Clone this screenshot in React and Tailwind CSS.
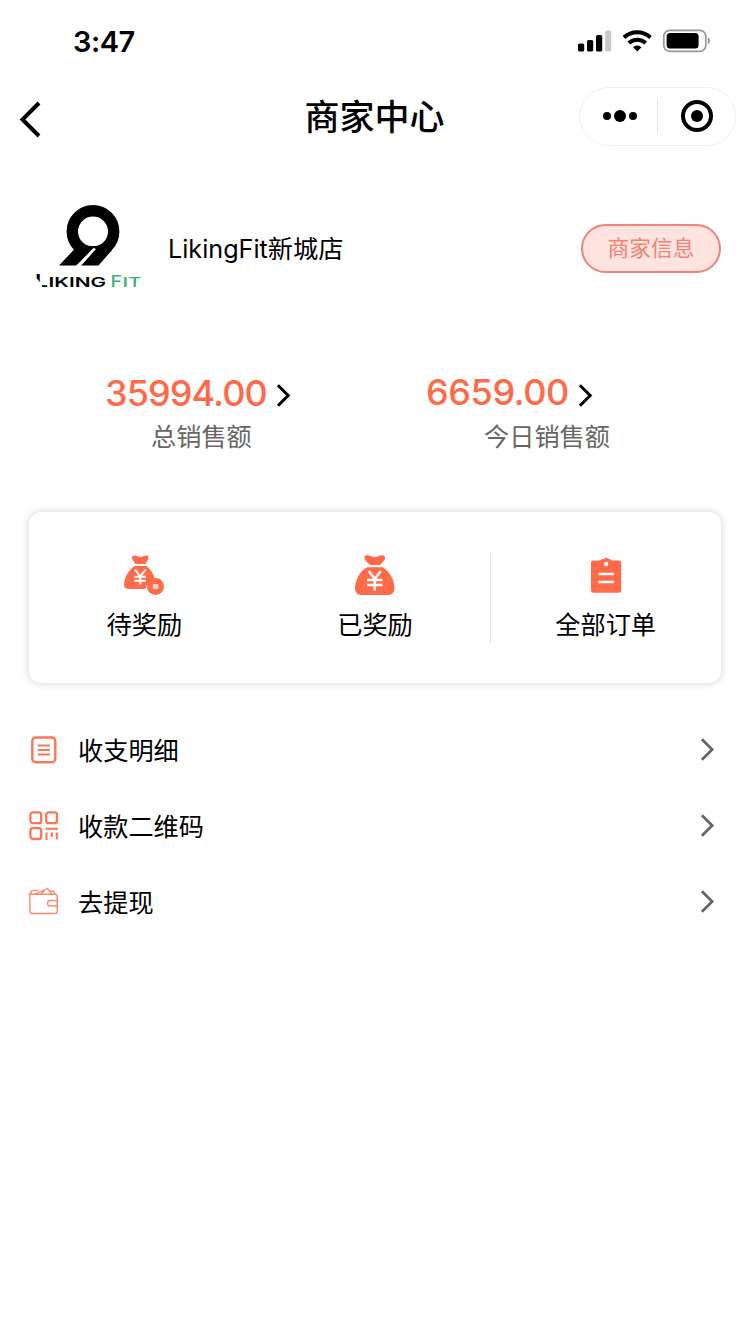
import React from "react";

const MoneyBag = ({ children }) => (
  <svg viewBox="0 0 42 42" className="w-[42px] h-[42px]" fill="#ff6a48">
    {children}
  </svg>
);

const PendingIcon = () => (
  <MoneyBag>
    <path d="M9.5 5.500C8 2.500 10.500 1 13 1.800c2 .7 2.400 1.200 4.300 1.200s2.300-.5 4.300-1.200C24.500 1 26.500 2.700 25 5.500L22.300 10H12.500z" />
    <path d="M11.500 12h12c4.500 3.500 8 9.500 8.500 14.500-5 .5-9 4-9.500 8.500H5.500C2 35 .6 32 1.200 29c.8-6.500 4.500-13 10.300-17z" />
    <path
      d="M12 15.500l5.300 7 5.300-7M11.500 22.700h11.500M11.500 26.800h11.500M17.300 22v8.500"
      fill="none"
      stroke="#fff"
      strokeWidth="2"
    />
    <circle cx="32.500" cy="32.500" r="8.500" />
    <rect x="29.800" y="30" width="5.600" height="5" rx="1" fill="#ffd5ca" />
  </MoneyBag>
);

const RewardedIcon = () => (
  <MoneyBag>
    <path d="M11 5.500C9.200 2 12 .5 15 1.600c2.200.8 3.600 1.400 5.700 1.400s3.500-.6 5.700-1.400c3-1.100 6 .6 4.200 3.900-1.300 2.300-2.800 4-5 5.500h-9.500c-2.200-1.500-3.800-3.200-5.100-5.500z" />
    <path d="M12.800 13.300h16c6.500 4 10.500 11 11.500 18.500.9 6-1.500 9.200-5.800 9.200H7c-4.300 0-6.700-3.200-5.800-9.200 1-7.500 5.100-14.500 11.600-18.500z" />
    <path
      d="M14.800 17l6 8 6-8M13 26h15.500M13 31h15.500M20.800 25v11.500"
      fill="none"
      stroke="#fff"
      strokeWidth="2.500"
    />
  </MoneyBag>
);

const OrdersIcon = () => (
  <svg viewBox="0 0 42 42" className="w-[42px] h-[42px]">
    <path
      d="M8 6.500h6.700c1.500 0 1.600-1.400 3-1.400h1c.8-1.600 4-1.600 4.800 0h1c1.400 0 1.500 1.400 3 1.400h6.700a2 2 0 0 1 2 2v28a2.300 2.300 0 0 1-2.300 2.300H8.300A2.300 2.300 0 0 1 6 36.500v-28a2 2 0 0 1 2-2z"
      fill="#ff6a48"
    />
    <circle cx="21.200" cy="10" r="2.200" fill="#fff" />
    <path d="M13.500 20h15.500M13.500 28h15.500" stroke="#fff" strokeWidth="2.600" />
  </svg>
);

const DetailIcon = () => (
  <svg viewBox="0 0 30 30" className="w-[30px] h-[30px]" fill="none" stroke="#fa7658">
    <rect x="3.300" y="2.500" width="23" height="24.800" rx="3.500" strokeWidth="2.400" />
    <path d="M8.700 10.500h12.300M8.700 15h12.300M8.700 19.500h12.300" strokeWidth="2" />
  </svg>
);

const QrIcon = () => (
  <svg viewBox="0 0 30 30" className="w-[30px] h-[30px]" fill="none" stroke="#fa7658">
    <rect x="1.400" y="1.400" width="10.800" height="10.800" rx="2.500" strokeWidth="2.300" />
    <rect x="17.200" y="1.400" width="10.800" height="10.800" rx="2.500" strokeWidth="2.300" />
    <rect x="1.400" y="17.200" width="10.800" height="10.800" rx="2.500" strokeWidth="2.300" />
    <path d="M16.500 17.800h12.500M17.500 21.500v7.500M22.800 21.500v4.500M27.800 21.500v7" strokeWidth="2.100" />
  </svg>
);

const WalletIcon = () => (
  <svg viewBox="0 0 30 30" className="w-[30px] h-[30px]" fill="none" stroke="#fa8a72" strokeWidth="1.400">
    <path d="M28.300 13.500V9.500a2.200 2.200 0 0 0-2.200-2.200H3A2.200 2.200 0 0 1 3 3.500h6.500M.9 5.500v18.800A2.200 2.200 0 0 0 3 26.500h23.100a2.200 2.200 0 0 0 2.200-2.200V19" />
    <path d="M6 7.200L18.500 1.500l4.500 5.700M12 7.200L16 3M21 4h3.500l1.300 3.200" />
    <path d="M28.300 13.500h-7a2.750 2.750 0 0 0 0 5.500h7z" />
  </svg>
);

const Logo = () => (
  <svg viewBox="0 0 110 90" className="w-[110px] h-[90px]">
    <circle cx="58" cy="28.500" r="20.700" fill="none" stroke="#000" strokeWidth="11.400" />
    <path d="M24 62.500L41 44.500 58 43 77.500 46.500 63.500 62.500z" />
    <path d="M40.800 63L45.800 63 61 46 55.500 43.500 58.500 45z" fill="#fff" />
    <g fontFamily="Inter, sans-serif" fontSize="13.400" fontWeight="600">
      <text x="0" y="84" fontSize="17" textLength="13" lengthAdjust="spacingAndGlyphs">L</text>
      <path d="M-1 75.500L2 75.500 7 82V86H-1z" fill="#fff" />
      <text x="13.500" y="84" textLength="57.500" lengthAdjust="spacingAndGlyphs">IKING</text>
      <g fill="#3db273" fontWeight="500">
        <text x="75.500" y="84" fontSize="16" textLength="11.500" lengthAdjust="spacingAndGlyphs">F</text>
        <text x="87.500" y="84" textLength="19" lengthAdjust="spacingAndGlyphs">IT</text>
      </g>
      <path d="M108 77.500L100 85.500H108z" fill="#fff" />
    </g>
  </svg>
);

const Chevron = ({ className, width = 3.2 }) => (
  <svg viewBox="0 0 16 26" className={className} fill="none" stroke="currentColor" strokeWidth={width}>
    <path d="M2 2L13 13L2 24" />
  </svg>
);

const StatusBar = () => (
  <div className="h-[80px] pt-[2px] pl-[73px] pr-[39px] flex items-center justify-between">
    <span className="mt-px text-[29px] font-semibold tracking-[-0.5px]">3:47</span>
    <svg viewBox="0 0 134 24" className="w-[134px] h-[24px]">
      <rect x="1" y="14.500" width="6.200" height="8" rx="1.500" />
      <rect x="10" y="11" width="6.200" height="11.500" rx="1.500" />
      <rect x="19" y="6" width="6.200" height="16.500" rx="1.500" />
      <rect x="28.200" y="1.500" width="6" height="21" rx="1.500" fill="#c8c8c8" />
      <g fill="none" stroke="#000" strokeWidth="4">
        <path d="M47 8.500a19.500 19.500 0 0 1 26.500 0" />
        <path d="M51.800 14a12.500 12.500 0 0 1 16.900 0" />
      </g>
      <path d="M56 18.200a6.500 6.500 0 0 1 8.500 0L60.300 22.500z" />
      <rect x="86.800" y="1.300" width="42" height="21" rx="6" fill="none" stroke="#999" strokeWidth="1.700" />
      <rect x="89.600" y="4" width="32" height="15.600" rx="3.500" />
      <path d="M130.800 8.500c2.800.8 2.800 6 0 6.800z" fill="#999" />
    </svg>
  </div>
);

const NavBar = () => (
  <div className="h-[74px] pl-[18px] pr-[14px] grid grid-cols-[1fr_auto_1fr] items-center">
    <svg viewBox="0 0 24 38" className="w-[24px] h-[38px] mt-[3px]" fill="none" stroke="#000" strokeWidth="4">
      <path d="M21 3L4.500 19.500L21 36" />
    </svg>
    <h1 className="text-[35px] leading-[50px] font-medium -ml-[5px]">商家中心</h1>
    <div className="justify-self-end -mt-[2px] w-[157px] h-[59px] rounded-full border border-[#f0f0f0] flex items-center">
      <div className="w-[77px] pl-[3px] flex items-center justify-center gap-[3px]">
        <i className="w-[8px] h-[8px] rounded-full bg-black" />
        <i className="w-[12px] h-[12px] rounded-full bg-black" />
        <i className="w-[8px] h-[8px] rounded-full bg-black" />
      </div>
      <div className="w-px h-[34px] bg-[#e6e6e6]" />
      <div className="flex-1 flex justify-center">
        <div className="w-[32px] h-[32px] rounded-full border-4 border-black flex items-center justify-center">
          <i className="w-[12px] h-[12px] rounded-full bg-black" />
        </div>
      </div>
    </div>
  </div>
);

const actions = [
  { label: "待奖励", icon: <PendingIcon /> },
  { label: "已奖励", icon: <RewardedIcon /> },
  { label: "全部订单", icon: <OrdersIcon /> },
];

const menu = [
  { label: "收支明细", icon: <DetailIcon /> },
  { label: "收款二维码", icon: <QrIcon /> },
  { label: "去提现", icon: <WalletIcon /> },
];

const App = () => {
  return (
    <div className="w-[750px] h-[1334px] overflow-hidden bg-white text-black font-[Inter,'Noto_Sans_CJK_SC',sans-serif]">
      <StatusBar />
      <NavBar />

      <section className="mt-[46px] h-[96px] pl-[35px] pr-[29px] flex items-center">
        <Logo />
        <h2 className="ml-[23px] mt-[2px] text-[25.2px] leading-[36px]">LikingFit新城店</h2>
        <button className="ml-auto w-[140px] h-[49px] pt-[2px] rounded-full border-2 border-[#ee8578] bg-[#ffe3df] text-[#ee8578] text-[21.7px] leading-none">
          商家信息
        </button>
      </section>

      <section className="mt-[74px] h-[142px] flex">
        <div className="w-[291px] pl-[105px]">
          <div className="flex items-center justify-between h-[45px]">
            <span className="text-[36px] font-medium text-[#ff6a48] tracking-[-0.9px]">35994.00</span>
            <Chevron className="w-[15px] h-[25px] mt-[5px]" />
          </div>
          <p className="ml-[46px] text-[25.2px] leading-[44px] text-[#666]">总销售额</p>
        </div>
        <div className="ml-[135px] w-[190px]">
          <div className="flex items-center justify-between w-[167px] h-[45px]">
            <span className="-mt-px text-[36px] font-medium text-[#ff6a48] tracking-[-0.4px]">6659.00</span>
            <Chevron className="w-[15px] h-[25px] mt-[5px]" />
          </div>
          <p className="ml-[58px] text-[25.2px] leading-[44px] text-[#666]">今日销售额</p>
        </div>
      </section>

      <section className="mx-[29px] h-[171px] rounded-xl bg-white shadow-[0_0_8px_rgba(0,0,0,0.18)] grid grid-cols-3">
        {actions.map((item, i) => (
          <div key={item.label} className="flex items-center">
            {i === 2 && <div className="w-px h-[90px] -mr-px bg-[#e5e5e5]" />}
            <div className="flex-1 flex flex-col items-center">
              {item.icon}
              <span className="mt-[11px] -mb-px text-[25.2px] leading-[36px]">{item.label}</span>
            </div>
          </div>
        ))}
      </section>

      <ul className="mt-[29px]">
        {menu.map((item) => (
          <li key={item.label} className="h-[76px] pl-[29px] pr-[35px] flex items-center">
            {item.icon}
            <span className="ml-[19px] mt-px text-[25.2px] leading-[36px]">{item.label}</span>
            <Chevron className="ml-auto -mt-px w-[15px] h-[25px] text-[#666]" width={2.9} />
          </li>
        ))}
      </ul>
    </div>
  );
};

export default App;
